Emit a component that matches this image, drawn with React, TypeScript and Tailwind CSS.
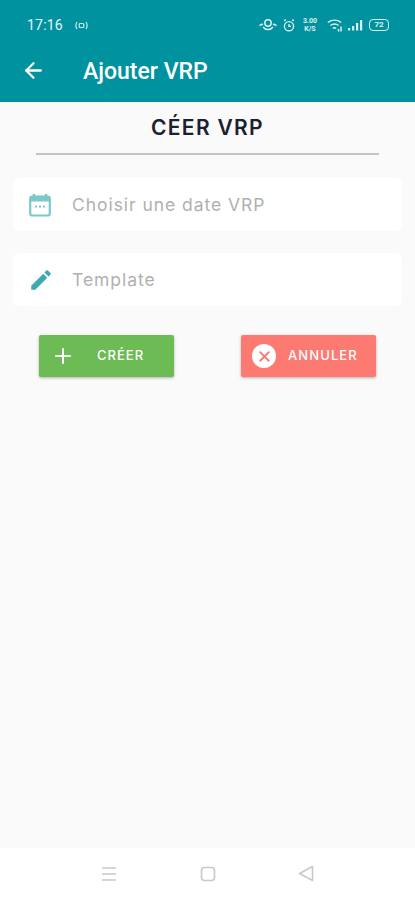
import { ArrowLeft, Plus, X } from "lucide-react";

function StatusIcons() {
  return (
    <div className="flex items-center gap-[6px] text-white/85">
      {/* eye */}
      <svg width="18" height="14" viewBox="0 0 18 14" fill="none" stroke="currentColor" strokeWidth="1.5">
        <path d="M.5 7.5 4 6M17.5 7.5 14 6" />
        <circle cx="9" cy="5" r="3.2" />
        <path d="M4 9c2.5 3.4 7.5 3.4 10 0" />
      </svg>
      {/* alarm */}
      <svg width="12" height="13" viewBox="0 0 12 13" fill="none" stroke="currentColor" strokeWidth="1.4">
        <circle cx="6" cy="7.2" r="4.6" />
        <path d="M1 1.5 3 .8M11 1.5 9 .8M6 5v2.4h2" />
      </svg>
      {/* data speed */}
      <div className="flex w-[18px] flex-col items-center font-['Roboto',sans-serif] text-[7px] leading-[8px] font-bold">
        <span>3.00</span>
        <span>K/S</span>
      </div>
      {/* wifi */}
      <svg width="17" height="13" viewBox="0 0 17 13" fill="none" stroke="currentColor" strokeWidth="1.5" className="ml-[2px]">
        <path d="M.8 3.5c4-3 9.4-3 13.400 0M3.300 6.500c2.800-2 5.600-2 8.400 0M5.800 9.300c1.200-.8 2.200-.8 3.400 0" />
        <path d="M14 7.500v5M11.500 10v2.500" />
      </svg>
      {/* signal */}
      <svg width="15" height="12" viewBox="0 0 15 12" fill="currentColor" className="-ml-[2px]">
        <rect x="0" y="9" width="2.2" height="2.5" />
        <rect x="4" y="7" width="2.2" height="4.5" />
        <rect x="8" y="4" width="2.2" height="7.5" />
        <rect x="12" y="1" width="2.2" height="10.5" />
      </svg>
      {/* battery */}
      <div className="grid h-[12px] w-[20px] place-items-center rounded-[4px] border border-white/85 font-['Roboto',sans-serif] text-[8px] leading-none font-bold">
        72
      </div>
    </div>
  );
}

function FieldRow({ icon, label }: { icon: React.ReactNode; label: string }) {
  return (
    <div className="flex h-[53px] items-center rounded-md bg-white pl-[15px]">
      <div className="grid w-[24px] place-items-center">{icon}</div>
      <span className="mt-[1px] ml-[20px] text-[17.5px] tracking-[0.95px] text-[#b0b0b0]">{label}</span>
    </div>
  );
}

function App() {
  return (
    <div className="flex h-[900px] w-full flex-col overflow-hidden bg-[#fafafa] font-['Inter',sans-serif]">
      <header className="h-[102px] shrink-0 bg-[#01929f] text-white">
        <div className="flex h-[50px] items-center justify-between pr-[26px] pl-[27px]">
          <div className="flex items-center gap-[12px]">
            <span className="font-['Roboto',sans-serif] text-[14px] tracking-[0.2px] text-white/90">17:16</span>
            <svg width="13" height="9" viewBox="0 0 13 9" fill="none" stroke="currentColor" strokeWidth="1.2" className="text-white/80">
              <path d="M2 1C.7 3 .7 6 2 8M11 1c1.3 2 1.3 5 0 7" />
              <rect x="4.2" y="2.5" width="4.6" height="4" rx="1" />
            </svg>
          </div>
          <StatusIcons />
        </div>
        <div className="flex h-[41px] items-center pl-[21px]">
          <ArrowLeft size={25} strokeWidth={2.2} />
          <span className="mt-[3px] ml-[37px] font-['Roboto',sans-serif] text-[23px] font-medium">Ajouter VRP</span>
        </div>
      </header>

      <main className="flex-1 px-[13px]">
        <h1 className="mt-[13px] text-center text-[21px] leading-[26px] font-semibold tracking-[1.3px] text-[#1c2130]">
          CÉER VRP
        </h1>
        <div className="mx-[23px] mt-[12px] h-[2px] bg-[#c4c4c4]" />

        <div className="mt-[23px] flex flex-col gap-[22px]">
          <FieldRow
            label="Choisir une date VRP"
            icon={
              <svg width="22" height="24" viewBox="0 0 22 24" fill="none">
                <path d="M5 1v4M17 1v4" stroke="#7cc8cb" strokeWidth="2.4" />
                <rect x="1.2" y="3.5" width="19.6" height="19" rx="2" stroke="#7cc8cb" strokeWidth="2.2" />
                <rect x="1.2" y="3.5" width="19.6" height="5" fill="#7cc8cb" />
                <path d="M6 13.5h2M10 13.5h2M14 13.5h2" stroke="#7cc8cb" strokeWidth="2" />
              </svg>
            }
          />
          <FieldRow
            label="Template"
            icon={
              <svg width="26" height="26" viewBox="0 0 24 24" fill="#3ea9b1">
                <path d="M3 17.25V21h3.75L17.81 9.94l-3.75-3.75L3 17.25zM20.71 7.04c.39-.39.39-1.02 0-1.41l-2.34-2.34c-.39-.39-1.02-.39-1.41 0l-1.83 1.83 3.75 3.75 1.83-1.83z" />
              </svg>
            }
          />
        </div>

        <div className="mt-[29px] flex justify-between pr-[26px] pl-[26px]">
          <button className="flex h-[42px] w-[135px] items-center rounded-[2px] bg-[#6cbb54] pl-[12px] text-white shadow-[0_1px_3px_rgba(0,0,0,0.3)]">
            <Plus size={24} strokeWidth={2} />
            <span className="ml-[22px] text-[13px] font-medium tracking-[1px]">CRÉER</span>
          </button>
          <button className="flex h-[42px] w-[135px] items-center rounded-[2px] bg-[#fd7a72] pl-[11px] text-white shadow-[0_1px_3px_rgba(0,0,0,0.3)]">
            <span className="grid h-[24px] w-[24px] place-items-center rounded-full bg-white">
              <X size={17} strokeWidth={2.6} color="#fd7a72" />
            </span>
            <span className="ml-[12px] text-[13px] font-medium tracking-[1.1px]">ANNULER</span>
          </button>
        </div>
      </main>

      <nav className="flex h-[52px] shrink-0 items-center bg-white pb-[1px] pl-[101px] text-[#c9c9c9]">
        <svg width="16" height="16" viewBox="0 0 16 16" stroke="currentColor" strokeWidth="1.6">
          <path d="M1 2h14M1 8h14M1 14h14" />
        </svg>
        <svg width="16" height="16" viewBox="0 0 16 16" fill="none" stroke="currentColor" strokeWidth="1.6" className="ml-[83px]">
          <rect x="1.5" y="1.5" width="13" height="13" rx="3" />
        </svg>
        <svg width="16" height="17" viewBox="0 0 16 17" fill="none" stroke="currentColor" strokeWidth="1.6" className="ml-[82px]">
          <path d="M14.5 1.5v14L1.5 8.5z" strokeLinejoin="round" />
        </svg>
      </nav>
    </div>
  );
}

export default App;
